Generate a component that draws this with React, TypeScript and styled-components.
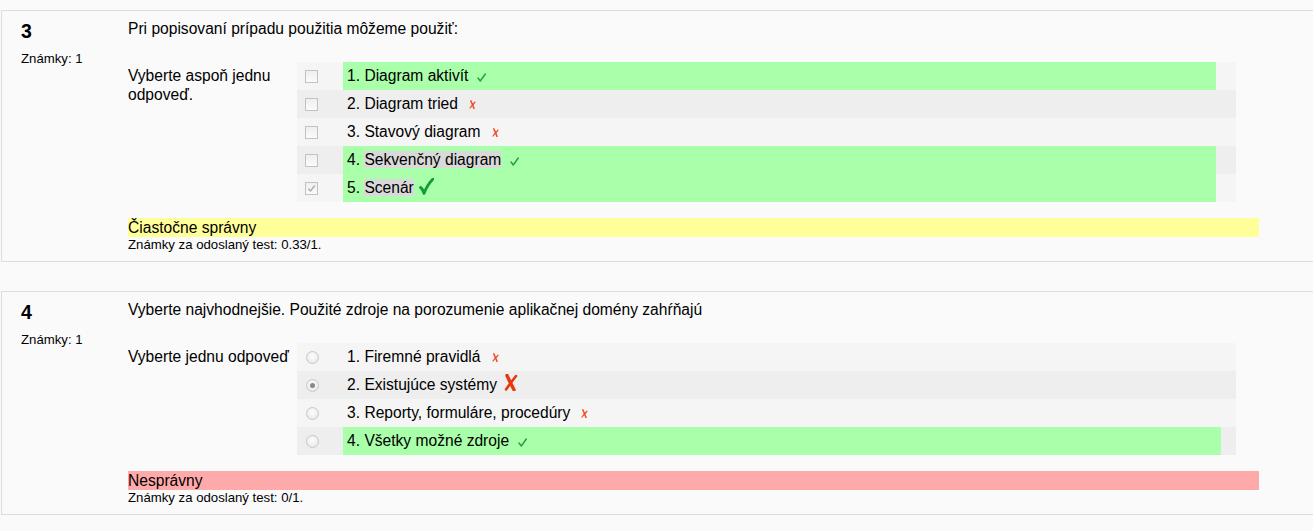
import React from 'react';
import styled, { createGlobalStyle } from 'styled-components';

const GlobalStyle = createGlobalStyle`
  html, body {
    margin: 0;
    padding: 0;
    background: #fafafa;
    overflow: hidden;
  }
  body {
    font-family: "Liberation Sans", Arial, sans-serif;
    color: #000;
  }
`;

const Page = styled.div`
  width: 1360px;
  padding: 10px 0 0 1px;
  display: flex;
  flex-direction: column;
  gap: 29px;
`;

const Question = styled.div`
  display: flex;
  border: 1px solid #dddddd;
  padding: 9px 0 8px 0;
`;

const Info = styled.div`
  flex-shrink: 0;
  width: 107px;
  padding-left: 19px;
`;

const QNumber = styled.div`
  font-size: 19.5px;
  font-weight: bold;
  line-height: 22px;
`;

const Marks = styled.div`
  margin-top: 9px;
  font-size: 13.2px;
  line-height: 16px;
`;

const Content = styled.div`
  width: 1131px;
  flex-shrink: 0;
`;

const QText = styled.div`
  font-size: 15.6px;
  line-height: 18px;
  margin-bottom: 24px;
`;

const AnswerBlock = styled.div`
  display: flex;
`;

const Prompt = styled.div`
  width: 169px;
  flex-shrink: 0;
  padding-top: 4px;
  font-size: 15.6px;
  line-height: 19px;
`;

const AnswerTable = styled.div`
  width: 939px;
  display: flex;
  flex-direction: column;
`;

const Row = styled.div<{ $alt: boolean }>`
  display: flex;
  height: 28px;
  background: ${(p) => (p.$alt ? '#eeeeee' : '#f5f5f5')};
`;

const ControlCell = styled.div`
  width: 38px;
  padding-left: 8px;
  display: flex;
  align-items: center;
  flex-shrink: 0;
`;

const LabelCell = styled.div<{ $correct: boolean; $width: number }>`
  width: ${(p) => p.$width}px;
  padding-left: 4px;
  box-sizing: border-box;
  background: ${(p) => (p.$correct ? '#aaffaa' : 'transparent')};
  font-size: 15.6px;
  line-height: 28px;
  white-space: nowrap;
`;

const Highlight = styled.span`
  background: #d9d9d9;
`;

const CheckBox = styled.span`
  width: 11px;
  height: 11px;
  border: 1px solid #c2c2c2;
  background: linear-gradient(#efefef, #fbfbfb);
  display: flex;
  align-items: center;
  justify-content: center;
`;

const Radio = styled.span`
  width: 11px;
  height: 11px;
  margin-left: 1px;
  border: 1px solid #c8c8c8;
  border-radius: 50%;
  background: radial-gradient(circle at 50% 40%, #fdfdfd, #e4e4e4);
  display: flex;
  align-items: center;
  justify-content: center;
`;

const RadioDot = styled.span`
  width: 5px;
  height: 5px;
  border-radius: 50%;
  background: #888888;
`;

const Icon = styled.svg<{ $ml: number; $va: number }>`
  margin-left: ${(p) => p.$ml}px;
  vertical-align: ${(p) => p.$va}px;
`;

const Feedback = styled.div<{ $tone: 'partial' | 'wrong' }>`
  margin-top: 16px;
  background: ${(p) => (p.$tone === 'partial' ? '#ffff99' : '#ffaaaa')};
  font-size: 15.6px;
  line-height: 19px;
`;

const GradeLine = styled.div`
  font-size: 13.2px;
  line-height: 16px;
`;

type Mark = 'tick' | 'cross' | 'bigTick' | 'bigCross';

const MarkIcon = ({ kind }: { kind: Mark }) => {
  if (kind === 'tick')
    return (
      <Icon $ml={9} $va={-1} width="9" height="9" viewBox="0 0 9 9">
        <path d="M1 5 L3.3 8 L8.3 1" fill="none" stroke="#2a9a3c" strokeWidth="1.4" strokeLinecap="round" strokeLinejoin="round" />
      </Icon>
    );
  if (kind === 'cross')
    return (
      <Icon $ml={11} $va={0} width="7" height="9" viewBox="0 0 7 9">
        <path d="M1.8 0.8 C3 3 4 6 5 8.4" fill="none" stroke="#f04a22" strokeWidth="1.5" strokeLinecap="round" />
        <path d="M6 2.2 C4.4 4 2.6 6 1 8" fill="none" stroke="#f04a22" strokeWidth="1.2" strokeLinecap="round" />
      </Icon>
    );
  if (kind === 'bigTick')
    return (
      <Icon $ml={5} $va={-2} width="15" height="17" viewBox="0 0 15 17">
        <path d="M1.5 9.5 C3 10.5 4.2 12.5 5 15.5 C7 10 9.5 5.5 14 1" fill="none" stroke="#159b33" strokeWidth="2.8" strokeLinecap="round" strokeLinejoin="round" />
      </Icon>
    );
  return (
    <Icon $ml={7} $va={-1} width="14" height="17" viewBox="0 0 14 17">
      <path d="M3 1.5 C5 6 7.5 11 10 15.8" fill="none" stroke="#e8380d" strokeWidth="3.4" strokeLinecap="round" />
      <path d="M12 2 C9 6 5.5 10.5 2 15.5" fill="none" stroke="#e8380d" strokeWidth="2.6" strokeLinecap="round" />
    </Icon>
  );
};

type Answer = {
  num: number;
  text: string;
  correct: boolean;
  highlight?: boolean;
  checked?: boolean;
  mark: Mark;
};

type QuestionData = {
  no: number;
  text: string;
  prompt: string;
  type: 'checkbox' | 'radio';
  labelWidth: number;
  answers: Answer[];
  tone: 'partial' | 'wrong';
  feedback: string;
  grade: string;
};

const questions: QuestionData[] = [
  {
    no: 3,
    text: 'Pri popisovaní prípadu použitia môžeme použiť:',
    prompt: 'Vyberte aspoň jednu odpoveď.',
    type: 'checkbox',
    labelWidth: 873,
    answers: [
      { num: 1, text: 'Diagram aktivít', correct: true, mark: 'tick' },
      { num: 2, text: 'Diagram tried', correct: false, mark: 'cross' },
      { num: 3, text: 'Stavový diagram', correct: false, mark: 'cross' },
      { num: 4, text: 'Sekvenčný diagram', correct: true, highlight: true, mark: 'tick' },
      { num: 5, text: 'Scenár', correct: true, highlight: true, checked: true, mark: 'bigTick' },
    ],
    tone: 'partial',
    feedback: 'Čiastočne správny',
    grade: 'Známky za odoslaný test: 0.33/1.',
  },
  {
    no: 4,
    text: 'Vyberte najvhodnejšie. Použité zdroje na porozumenie aplikačnej domény zahŕňajú',
    prompt: 'Vyberte jednu odpoveď',
    type: 'radio',
    labelWidth: 878,
    answers: [
      { num: 1, text: 'Firemné pravidlá', correct: false, mark: 'cross' },
      { num: 2, text: 'Existujúce systémy', correct: false, checked: true, mark: 'bigCross' },
      { num: 3, text: 'Reporty, formuláre, procedúry', correct: false, mark: 'cross' },
      { num: 4, text: 'Všetky možné zdroje', correct: true, mark: 'tick' },
    ],
    tone: 'wrong',
    feedback: 'Nesprávny',
    grade: 'Známky za odoslaný test: 0/1.',
  },
];

const Control = ({ type, checked }: { type: 'checkbox' | 'radio'; checked?: boolean }) =>
  type === 'checkbox' ? (
    <CheckBox>
      {checked && (
        <svg width="9" height="9" viewBox="0 0 9 9">
          <path d="M1.3 4.6 L3.5 7 L7.8 1.6" fill="none" stroke="#a8a8a8" strokeWidth="1.4" />
        </svg>
      )}
    </CheckBox>
  ) : (
    <Radio>{checked && <RadioDot />}</Radio>
  );

export default function App() {
  return (
    <>
      <GlobalStyle />
      <Page>
        {questions.map((q) => (
          <Question key={q.no}>
            <Info>
              <QNumber>{q.no}</QNumber>
              <Marks>Známky: 1</Marks>
            </Info>
            <Content>
              <QText>{q.text}</QText>
              <AnswerBlock>
                <Prompt>{q.prompt}</Prompt>
                <AnswerTable>
                  {q.answers.map((a, i) => (
                    <Row key={a.num} $alt={i % 2 === 1}>
                      <ControlCell>
                        <Control type={q.type} checked={a.checked} />
                      </ControlCell>
                      <LabelCell $correct={a.correct} $width={q.labelWidth}>
                        {a.num}.{' '}
                        {a.highlight ? <Highlight>{a.text}</Highlight> : a.text}
                        <MarkIcon kind={a.mark} />
                      </LabelCell>
                    </Row>
                  ))}
                </AnswerTable>
              </AnswerBlock>
              <Feedback $tone={q.tone}>{q.feedback}</Feedback>
              <GradeLine>{q.grade}</GradeLine>
            </Content>
          </Question>
        ))}
      </Page>
    </>
  );
}
